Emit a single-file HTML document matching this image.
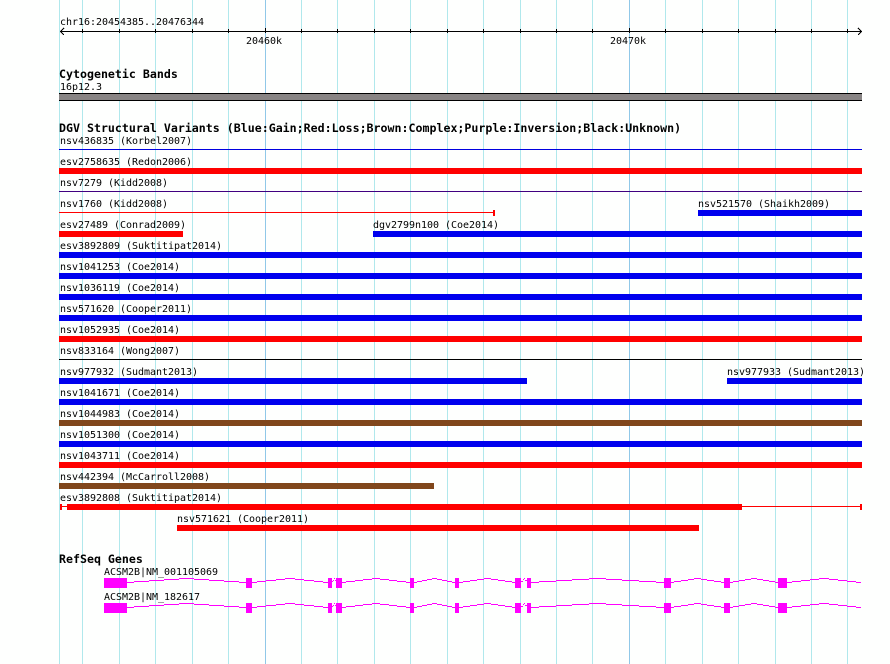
<!DOCTYPE html>
<html>
<head>
<meta charset="utf-8">
<style>
html,body{margin:0;padding:0;background:#fff;width:890px;height:664px;overflow:hidden}
svg{display:block}
text{font-family:"DejaVu Sans Mono","Liberation Mono",monospace;font-size:10px;letter-spacing:-0.02px;fill:#000;white-space:pre}
text.b{font-weight:bold;font-size:11.6px;letter-spacing:0.01px}
.s{shape-rendering:crispEdges}
</style>
</head>
<body>
<svg width="890" height="664" viewBox="0 0 890 664" xmlns="http://www.w3.org/2000/svg">
<rect width="890" height="664" fill="#fefffe"/>
<g class="s" fill="#b0e8ec">
<rect x="59" y="0" width="1" height="664"/><rect x="82" y="0" width="1" height="664"/><rect x="119" y="0" width="1" height="664"/><rect x="155" y="0" width="1" height="664"/><rect x="192" y="0" width="1" height="664"/><rect x="228" y="0" width="1" height="664"/><rect x="301" y="0" width="1" height="664"/><rect x="337" y="0" width="1" height="664"/><rect x="374" y="0" width="1" height="664"/><rect x="410" y="0" width="1" height="664"/><rect x="447" y="0" width="1" height="664"/><rect x="483" y="0" width="1" height="664"/><rect x="520" y="0" width="1" height="664"/><rect x="556" y="0" width="1" height="664"/><rect x="592" y="0" width="1" height="664"/><rect x="665" y="0" width="1" height="664"/><rect x="702" y="0" width="1" height="664"/><rect x="738" y="0" width="1" height="664"/><rect x="775" y="0" width="1" height="664"/><rect x="811" y="0" width="1" height="664"/><rect x="847" y="0" width="1" height="664"/>
<rect x="265" y="0" width="1" height="664" fill="#90c8e8"/><rect x="629" y="0" width="1" height="664" fill="#90c8e8"/>
</g>

<!-- axis -->
<g class="s" fill="#000">
<rect x="60" y="31" width="802" height="1"/>
<rect x="82" y="29" width="1" height="4"/><rect x="119" y="29" width="1" height="4"/><rect x="155" y="29" width="1" height="4"/><rect x="192" y="29" width="1" height="4"/><rect x="228" y="29" width="1" height="4"/><rect x="265" y="28" width="1" height="5"/><rect x="301" y="29" width="1" height="4"/><rect x="337" y="29" width="1" height="4"/><rect x="374" y="29" width="1" height="4"/><rect x="410" y="29" width="1" height="4"/><rect x="447" y="29" width="1" height="4"/><rect x="483" y="29" width="1" height="4"/><rect x="520" y="29" width="1" height="4"/><rect x="556" y="29" width="1" height="4"/><rect x="592" y="29" width="1" height="4"/><rect x="629" y="28" width="1" height="5"/><rect x="665" y="29" width="1" height="4"/><rect x="702" y="29" width="1" height="4"/><rect x="738" y="29" width="1" height="4"/><rect x="775" y="29" width="1" height="4"/><rect x="811" y="29" width="1" height="4"/><rect x="847" y="29" width="1" height="4"/>
</g>
<path class="s" d="M64 28L60.500 31.500L64 35M858 28L861.500 31.500L858 35" fill="none" stroke="#000" stroke-width="1"/>
<text x="60" y="25">chr16:20454385..20476344</text>
<text x="246" y="44">20460k</text>
<text x="610" y="44">20470k</text>

<!-- cytoband -->
<text class="b" x="59" y="78">Cytogenetic Bands</text>
<text x="60" y="90">16p12.3</text>
<rect class="s" x="59" y="93" width="803" height="8" fill="#000"/>
<rect class="s" x="59" y="94" width="803" height="6" fill="#888484"/>

<!-- DGV -->
<text class="b" x="59" y="132">DGV Structural Variants (Blue:Gain;Red:Loss;Brown:Complex;Purple:Inversion;Black:Unknown)</text>
<text x="60" y="144">nsv436835 (Korbel2007)</text>
<text x="60" y="165">esv2758635 (Redon2006)</text>
<text x="60" y="186">nsv7279 (Kidd2008)</text>
<text x="60" y="207">nsv1760 (Kidd2008)</text>
<text x="698" y="207">nsv521570 (Shaikh2009)</text>
<text x="60" y="228">esv27489 (Conrad2009)</text>
<text x="373" y="228">dgv2799n100 (Coe2014)</text>
<text x="60" y="249">esv3892809 (Suktitipat2014)</text>
<text x="60" y="270">nsv1041253 (Coe2014)</text>
<text x="60" y="291">nsv1036119 (Coe2014)</text>
<text x="60" y="312">nsv571620 (Cooper2011)</text>
<text x="60" y="333">nsv1052935 (Coe2014)</text>
<text x="60" y="354">nsv833164 (Wong2007)</text>
<text x="60" y="375">nsv977932 (Sudmant2013)</text>
<text x="727" y="375">nsv977933 (Sudmant2013)</text>
<text x="60" y="396">nsv1041671 (Coe2014)</text>
<text x="60" y="417">nsv1044983 (Coe2014)</text>
<text x="60" y="438">nsv1051300 (Coe2014)</text>
<text x="60" y="459">nsv1043711 (Coe2014)</text>
<text x="60" y="480">nsv442394 (McCarroll2008)</text>
<text x="60" y="501">esv3892808 (Suktitipat2014)</text>
<text x="177" y="522">nsv571621 (Cooper2011)</text>

<g class="s">
<rect x="59" y="149" width="803" height="1" fill="#0000e0"/>
<rect x="59" y="168" width="803" height="6" fill="#ff0000"/>
<rect x="59" y="191" width="803" height="1" fill="#400080"/>
<rect x="59" y="212" width="436" height="1" fill="#ff0000"/>
<rect x="493" y="210" width="2" height="6" fill="#ff0000"/>
<rect x="698" y="210" width="164" height="6" fill="#0000ee"/>
<rect x="59" y="231" width="124" height="6" fill="#ff0000"/>
<rect x="373" y="231" width="489" height="6" fill="#0000ee"/>
<rect x="59" y="252" width="803" height="6" fill="#0000ee"/>
<rect x="59" y="273" width="803" height="6" fill="#0000ee"/>
<rect x="59" y="294" width="803" height="6" fill="#0000ee"/>
<rect x="59" y="315" width="803" height="6" fill="#0000ee"/>
<rect x="59" y="336" width="803" height="6" fill="#ff0000"/>
<rect x="59" y="359" width="803" height="1" fill="#000"/>
<rect x="59" y="378" width="468" height="6" fill="#0000ee"/>
<rect x="727" y="378" width="135" height="6" fill="#0000ee"/>
<rect x="59" y="399" width="803" height="6" fill="#0000ee"/>
<rect x="59" y="420" width="803" height="6" fill="#80461b"/>
<rect x="59" y="441" width="803" height="6" fill="#0000ee"/>
<rect x="59" y="462" width="803" height="6" fill="#ff0000"/>
<rect x="59" y="483" width="375" height="6" fill="#80461b"/>
<rect x="60" y="506" width="802" height="1" fill="#ff0000"/>
<rect x="60" y="504" width="2" height="6" fill="#ff0000"/>
<rect x="860" y="504" width="2" height="6" fill="#ff0000"/>
<rect x="67" y="504" width="675" height="6" fill="#ff0000"/>
<rect x="177" y="525" width="522" height="6" fill="#ff0000"/>
</g>

<!-- genes -->
<text class="b" x="59" y="563">RefSeq Genes</text>
<text x="104" y="575">ACSM2B|NM_001105069</text>
<text x="104" y="600">ACSM2B|NM_182617</text>

<g id="g1" class="s" fill="#ff00ff">
<rect x="104" y="578" width="23" height="10"/><rect x="246" y="578" width="6" height="10"/><rect x="328" y="578" width="4" height="10"/><rect x="336" y="578" width="6" height="10"/><rect x="410" y="578" width="4" height="10"/><rect x="455" y="578" width="4" height="10"/><rect x="515" y="578" width="6" height="10"/><rect x="527" y="578" width="4" height="10"/><rect x="664" y="578" width="7" height="10"/><rect x="724" y="578" width="6" height="10"/><rect x="778" y="578" width="9" height="10"/>
<path fill="none" stroke="#ff00ff" stroke-width="1" d="
M127 582.500H134M134 581.500H149M149 580.500H164M164 579.500H179M179 578.500H194M194 579.500H209M209 580.500H224M224 581.500H239M239 582.500H246
M252 582.500H257M257 581.500H266M266 580.500H276M276 579.500H285M285 578.500H295M295 579.500H304M304 580.500H314M314 581.500H323M323 582.500H328
M332 581.500H333M333 580.500H334M334 578.500H335M335 580.500H336
M342 582.500H346M346 581.500H355M355 580.500H363M363 579.500H372M372 578.500H380M380 579.500H389M389 580.500H397M397 581.500H406M406 582.500H410
M414 582.500H417M417 581.500H422M422 580.500H427M427 579.500H432M432 578.500H437M437 579.500H442M442 580.500H447M447 581.500H452M452 582.500H455
M459 582.500H463M463 581.500H470M470 580.500H477M477 579.500H484M484 578.500H491M491 579.500H498M498 580.500H505M505 581.500H512M512 582.500H515
M521 581.500H523M523 579.500H524M524 578.500H525M525 580.500H527
M531 582.500H539M539 581.500H556M556 580.500H572M572 579.500H589M589 578.500H606M606 579.500H622M622 580.500H639M639 581.500H656M656 582.500H664
M671 582.500H674M674 581.500H681M681 580.500H688M688 579.500H694M694 578.500H701M701 579.500H707M707 580.500H714M714 581.500H721M721 582.500H724
M730 582.500H733M733 581.500H739M739 580.500H745M745 579.500H751M751 578.500H757M757 579.500H763M763 580.500H769M769 581.500H775M775 582.500H778
M787 582.500H792M792 581.500H801M801 580.500H810M810 579.500H819M819 578.500H829M829 579.500H838M838 580.500H847M847 581.500H856M856 582.500H861"/>
</g>
<g class="s" fill="#ff00ff" transform="translate(0 25)">
<rect x="104" y="578" width="23" height="10"/><rect x="246" y="578" width="6" height="10"/><rect x="328" y="578" width="4" height="10"/><rect x="336" y="578" width="6" height="10"/><rect x="410" y="578" width="4" height="10"/><rect x="455" y="578" width="4" height="10"/><rect x="515" y="578" width="6" height="10"/><rect x="527" y="578" width="4" height="10"/><rect x="664" y="578" width="7" height="10"/><rect x="724" y="578" width="6" height="10"/><rect x="778" y="578" width="9" height="10"/>
<path fill="none" stroke="#ff00ff" stroke-width="1" d="
M127 582.500H134M134 581.500H149M149 580.500H164M164 579.500H179M179 578.500H194M194 579.500H209M209 580.500H224M224 581.500H239M239 582.500H246
M252 582.500H257M257 581.500H266M266 580.500H276M276 579.500H285M285 578.500H295M295 579.500H304M304 580.500H314M314 581.500H323M323 582.500H328
M332 581.500H333M333 580.500H334M334 578.500H335M335 580.500H336
M342 582.500H346M346 581.500H355M355 580.500H363M363 579.500H372M372 578.500H380M380 579.500H389M389 580.500H397M397 581.500H406M406 582.500H410
M414 582.500H417M417 581.500H422M422 580.500H427M427 579.500H432M432 578.500H437M437 579.500H442M442 580.500H447M447 581.500H452M452 582.500H455
M459 582.500H463M463 581.500H470M470 580.500H477M477 579.500H484M484 578.500H491M491 579.500H498M498 580.500H505M505 581.500H512M512 582.500H515
M521 581.500H523M523 579.500H524M524 578.500H525M525 580.500H527
M531 582.500H539M539 581.500H556M556 580.500H572M572 579.500H589M589 578.500H606M606 579.500H622M622 580.500H639M639 581.500H656M656 582.500H664
M671 582.500H674M674 581.500H681M681 580.500H688M688 579.500H694M694 578.500H701M701 579.500H707M707 580.500H714M714 581.500H721M721 582.500H724
M730 582.500H733M733 581.500H739M739 580.500H745M745 579.500H751M751 578.500H757M757 579.500H763M763 580.500H769M769 581.500H775M775 582.500H778
M787 582.500H792M792 581.500H801M801 580.500H810M810 579.500H819M819 578.500H829M829 579.500H838M838 580.500H847M847 581.500H856M856 582.500H861"/>
</g>
</svg>
</body>
</html>
